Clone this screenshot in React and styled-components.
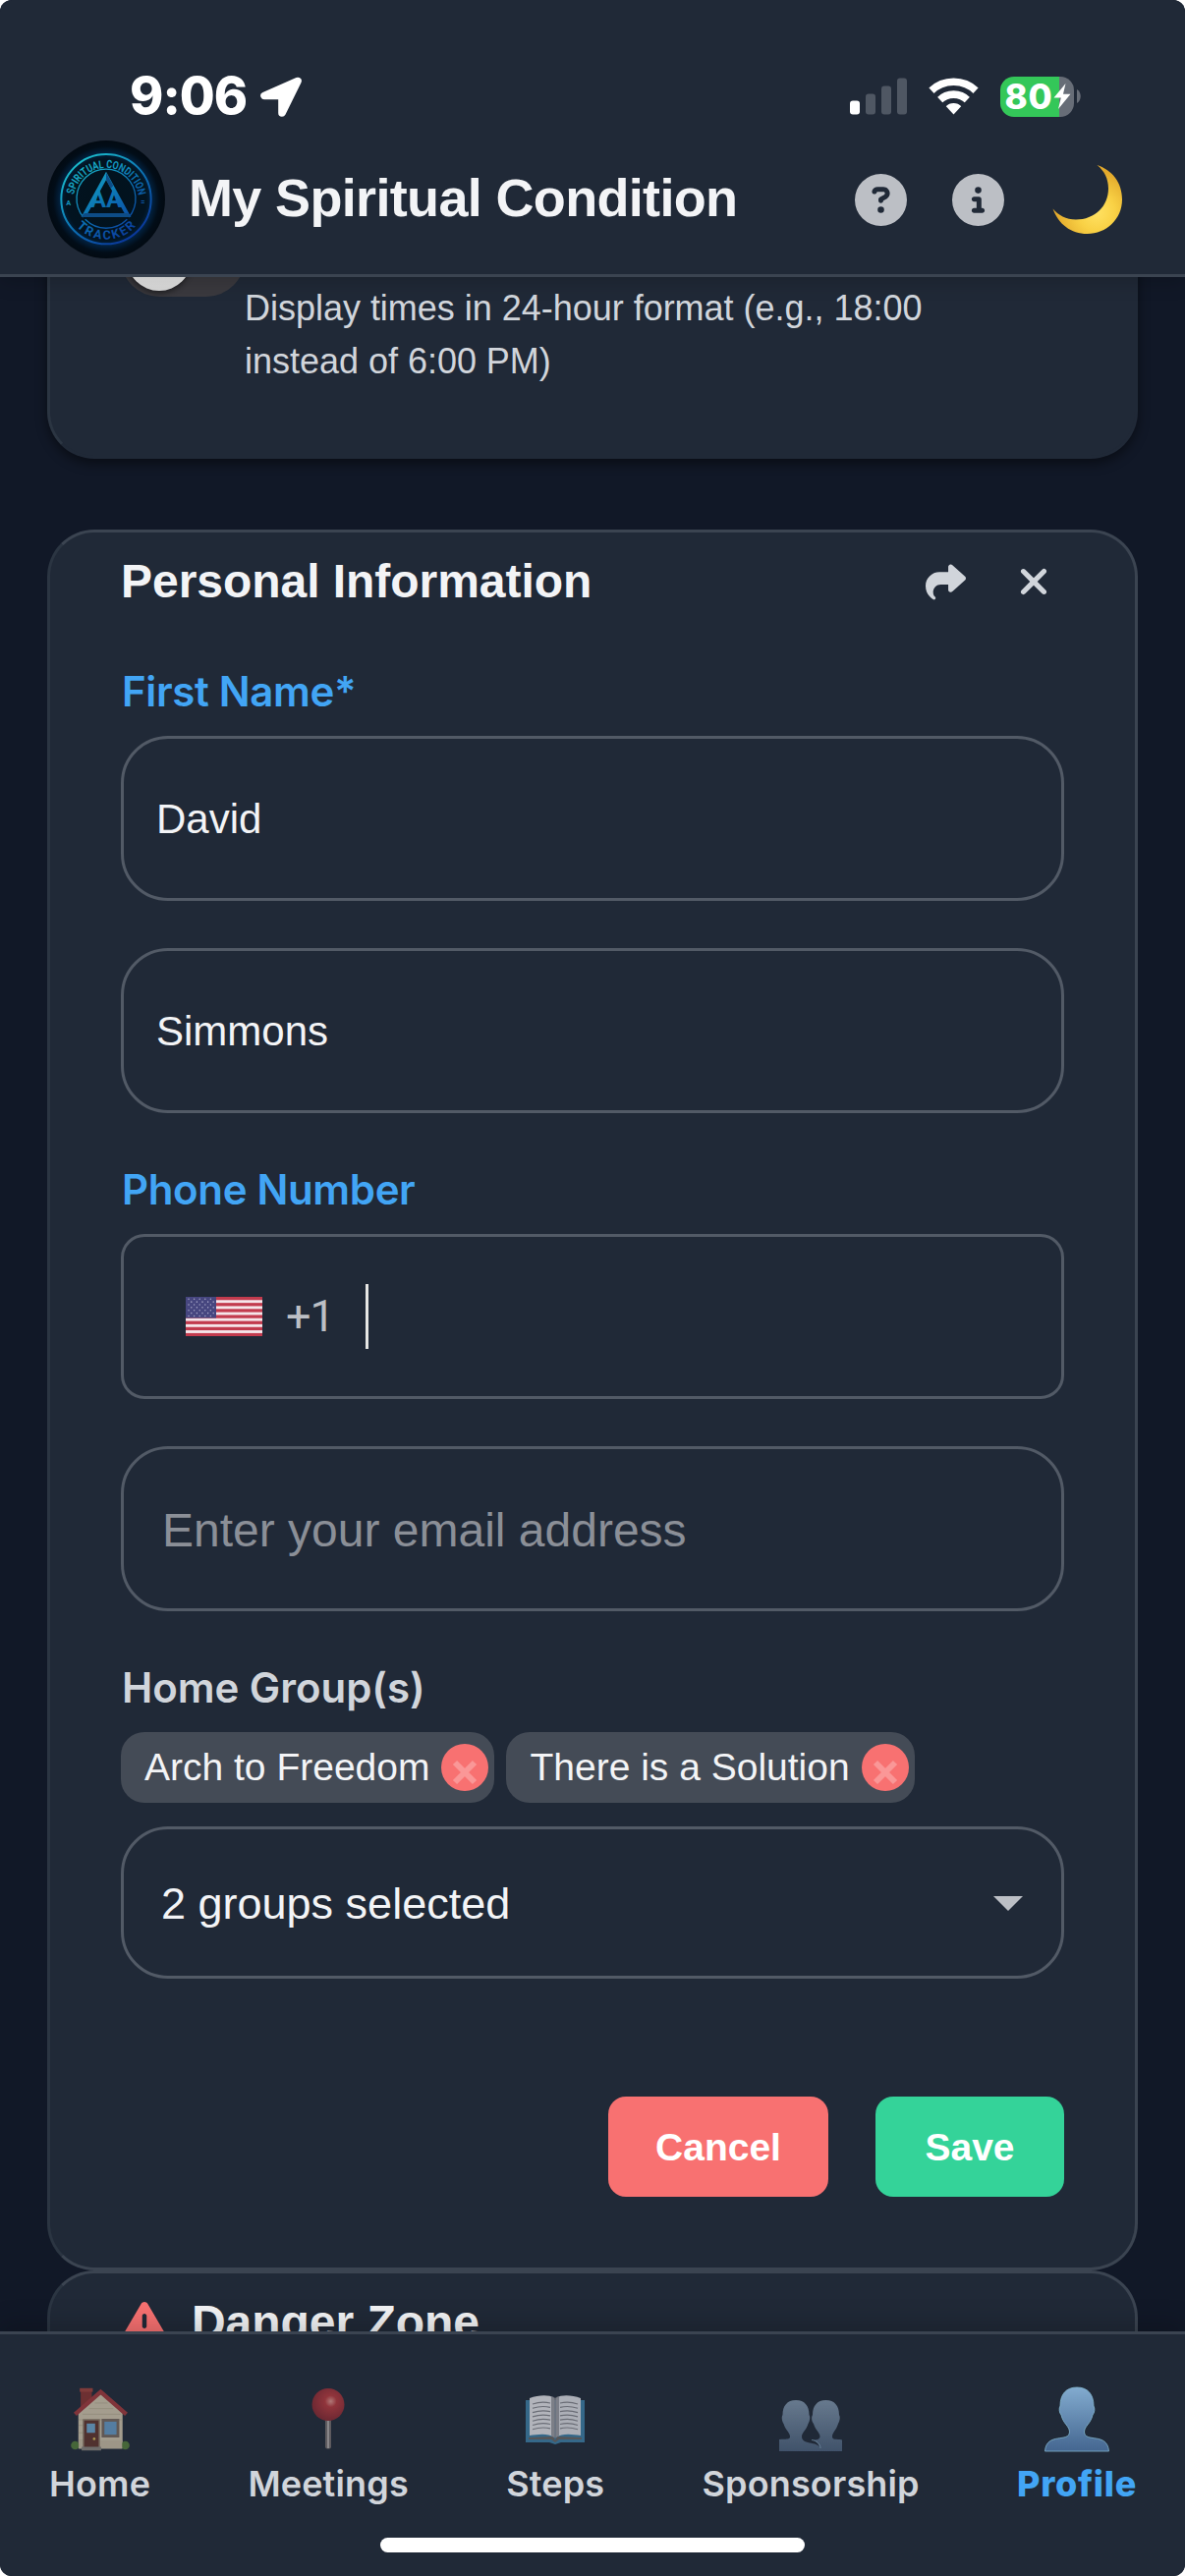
import React from "react";
import styled, { createGlobalStyle, css } from "styled-components";
import {
  FaCircleQuestion,
  FaCircleInfo,
  FaShare,
  FaXmark,
  FaTriangleExclamation,
} from "react-icons/fa6";

const helvetica = `"Liberation Sans", Helvetica, Arial, sans-serif`;
const system = `Inter, "Liberation Sans", sans-serif`;

const GlobalStyle = createGlobalStyle`
  *, *::before, *::after { box-sizing: border-box; }
  html, body { margin: 0; background: #ffffff; }
  svg { display: block; flex: none; }
`;

const Screen = styled.div`
  display: flex;
  flex-direction: column;
  width: 1206px;
  height: 2622px;
  overflow: hidden;
  border-radius: 12px;
  background: #111827;
  color: #f3f4f6;
  font-family: ${helvetica};
`;

/* ---------- header ---------- */

const Header = styled.header`
  position: relative;
  z-index: 2;
  flex: none;
  height: 282px;
  padding-top: 53px;
  background: #202937;
  border-bottom: 3px solid #3b4451;
  box-shadow: 0 6px 18px rgba(0, 0, 0, 0.16);
`;

const StatusBar = styled.div`
  display: flex;
  align-items: center;
  justify-content: space-between;
  height: 90px;
  padding: 0 106px 0 132px;
`;

const StatusGroup = styled.div`
  display: flex;
  align-items: center;
  gap: ${(p) => p.$gap}px;
`;

const Clock = styled.time`
  width: 118px;
  font: 800 52px/60px ${system};
  letter-spacing: -1px;
  white-space: nowrap;
  color: #ffffff;
`;

const Battery = styled.div`
  display: flex;
  align-items: center;
  gap: 3px;
`;

const BatteryBody = styled.div`
  display: flex;
  align-items: center;
  width: 75px;
  height: 41px;
  padding-left: 4.5px;
  border-radius: 14px;
  background: linear-gradient(90deg, #34c759 80%, #676d77 80%);
`;

const BatteryLevel = styled.span`
  font: 800 35px/41px ${system};
  letter-spacing: 0.8px;
  color: #ffffff;
`;

const TitleBar = styled.div`
  display: flex;
  align-items: center;
  height: 120px;
  padding: 0 60px 0 48px;
`;

const AppTitle = styled.h1`
  flex: 1;
  margin: 0 0 5px 24px;
  font: 700 54px/64px ${helvetica};
  letter-spacing: -0.66px;
  white-space: nowrap;
`;

const Actions = styled.div`
  display: flex;
  align-items: center;
  gap: 46px;
  color: #bcbfc5;
`;

/* ---------- content ---------- */

const Content = styled.main`
  flex: 1;
  min-height: 0;
  overflow: hidden;
  padding: 0 48px;
`;

const Card = styled.section`
  width: 1110px;
  padding: 0 72px;
  border: 3px solid #3b4451;
  border-left-color: #2b3542;
  border-radius: 48px;
  background: #202937;
`;

const SettingsCard = styled(Card)`
  height: 285px;
  margin: -100px 0 72px;
  padding-top: 39px;
  display: flex;
  border-color: #202937;
  border-left-color: #2b3542;
  box-shadow: 0 5px 12px rgba(0, 0, 0, 0.45);
`;

const Switch = styled.div`
  flex: none;
  width: 126px;
  height: 78px;
  padding: 6px;
  border-radius: 39px;
  background: #3a393e;
`;

const SwitchThumb = styled.div`
  width: 66px;
  height: 66px;
  border-radius: 50%;
  background: linear-gradient(#ffffff 55%, #d8d8d8);
  box-shadow: 0 3px 5px rgba(0, 0, 0, 0.4);
`;

const SettingHint = styled.p`
  width: 740px;
  margin: 63px 0 0;
  font-size: 36px;
  line-height: 54px;
  letter-spacing: -0.02px;
  color: #d1d5db;
`;

const ProfileCard = styled(Card)`
  height: 1772px;
  padding-top: 20px;
`;

const CardHead = styled.div`
  display: flex;
  align-items: center;
  justify-content: space-between;
  height: 60px;
  margin-bottom: 52px;
`;

const CardTitle = styled.h2`
  margin: 0;
  font: 700 48px/60px ${helvetica};
  letter-spacing: -0.04px;
  white-space: nowrap;
`;

const HeadActions = styled.div`
  display: flex;
  gap: 27.5px;
`;

const IconButton = styled.button`
  display: flex;
  align-items: center;
  justify-content: center;
  width: 62px;
  height: 60px;
  padding: 0;
  border: 0;
  background: none;
  color: #d1d5db;
`;

const Form = styled.div`
  display: flex;
  flex-direction: column;
  gap: 48px;
`;

const Field = styled.div`
  display: flex;
  flex-direction: column;
  gap: 15px;
`;

const Label = styled.div`
  height: 60px;
  padding-left: 1px;
  font: 600 42px/60px ${system};
  letter-spacing: ${(p) => (p.$muted ? -0.05 : -0.35)}px;
  color: ${(p) => (p.$muted ? "#d1d5db" : "#42a5f5")};
`;

const Input = styled.div`
  display: flex;
  align-items: center;
  height: ${(p) => p.$height || 168}px;
  padding: 1px 36px 0 33px;
  border: 3px solid #525a66;
  border-radius: 48px;
  font-size: 42px;
  white-space: nowrap;
  ${(p) =>
    p.$placeholder &&
    css`
      padding: 2px 36px 0 39px;
      font-size: 48px;
      color: #8b8f97;
    `}
`;

const PhoneInput = styled(Input)`
  padding: 0 36px 0 63px;
  border-radius: 24px;
`;

const DialCode = styled.span`
  margin-left: 24px;
  font: 400 45px/60px Roboto, sans-serif;
  letter-spacing: -1px;
  color: #bcbfc5;
`;

const Caret = styled.span`
  width: 3px;
  height: 66px;
  margin-left: 32px;
  background: #e6e6e4;
`;

const Chips = styled.div`
  display: flex;
  gap: 12px;
  margin-bottom: 9px;
`;

const Chip = styled.div`
  display: flex;
  align-items: center;
  gap: 12px;
  height: 72px;
  padding: 0 6px 0 24px;
  border-radius: 24px;
  background: #444b56;
  font-size: 39px;
  line-height: 46px;
  white-space: nowrap;
`;

const ChipRemove = styled.span`
  display: flex;
  align-items: center;
  justify-content: center;
  width: 48px;
  height: 48px;
  padding-top: 10px;
  border-radius: 50%;
  background: #f87171;
`;

const Select = styled(Input)`
  justify-content: space-between;
  padding: 2px 39px 0 38px;
  font-size: 45px;
`;

const Buttons = styled.div`
  display: flex;
  justify-content: flex-end;
  gap: 48px;
  margin-top: 72px;
`;

const Button = styled.button`
  width: ${(p) => p.$width}px;
  height: 102px;
  padding: 2px 0 0;
  border: 0;
  border-radius: 18px;
  background: ${(p) => p.$color};
  color: #ffffff;
  font: 700 39px/50px ${helvetica};
`;

const DangerCard = styled(Card)`
  height: 260px;
  padding-top: 18px;
`;

const DangerHead = styled.div`
  display: flex;
  align-items: center;
  gap: 24px;
  height: 63px;

  svg {
    color: #f87171;
  }
`;

/* ---------- bottom navigation ---------- */

const BottomNav = styled.nav`
  position: relative;
  z-index: 2;
  display: flex;
  flex-direction: column;
  align-items: center;
  flex: none;
  height: 249px;
  padding-top: 51px;
  background: #202937;
  border-top: 3px solid #3b4451;
  box-shadow: 0 -8px 24px rgba(0, 0, 0, 0.18);
`;

const Tabs = styled.div`
  display: flex;
  justify-content: space-between;
  width: 100%;
  padding: 0 49px 0 50px;
`;

const Tab = styled.div`
  display: flex;
  flex-direction: column;
  align-items: center;
  gap: 7px;
  font: ${(p) => (p.$active ? 800 : 600)} 36px/44px ${system};
  letter-spacing: ${(p) => (p.$active ? 0.7 : 0.15)}px;
  color: ${(p) => (p.$active ? "#42a5f5" : "#d1d5db")};

  svg {
    opacity: ${(p) => (p.$active ? 1 : 0.7)};
  }
`;

const HomeIndicator = styled.div`
  width: 432px;
  height: 15px;
  margin-top: 33px;
  border-radius: 8px;
  background: #ffffff;
`;

/* ---------- drawings ---------- */

const LocationArrow = () => (
  <svg width="42" height="41" viewBox="0 0 42 41">
    <path d="M38 4.5 4 19.5H22V37Z" fill="#fff" stroke="#fff" strokeWidth="7.6" strokeLinejoin="round" />
  </svg>
);

const SignalBars = () => (
  <svg width="58" height="38" viewBox="0 0 58 38">
    <rect x="0" y="23.5" width="10" height="14" rx="3" fill="#fff" />
    <rect x="16" y="16.5" width="10" height="21" rx="3" fill="#4f5763" />
    <rect x="32" y="8.5" width="10" height="29" rx="3" fill="#4f5763" />
    <rect x="48" y="0.5" width="10" height="37" rx="3" fill="#4f5763" />
  </svg>
);

const Wifi = () => (
  <svg width="51" height="38" viewBox="0 0 51 38">
    <clipPath id="wedge">
      <path d="M25.5 37.5-14.5-5.7H65.5Z" />
    </clipPath>
    <g clipPath="url(#wedge)" fill="none" stroke="#fff" strokeWidth="7.6">
      <circle cx="25.5" cy="37.5" r="33.2" />
      <circle cx="25.5" cy="37.5" r="20.4" />
      <circle cx="25.5" cy="37.5" r="11.4" fill="#fff" stroke="none" />
    </g>
  </svg>
);

const Bolt = () => (
  <svg width="18" height="26" viewBox="0 0 18 26">
    <path d="M12.5 0 .5 14.5H7.8L5 26 17.5 10.8H10Z" fill="#fff" />
  </svg>
);

const Logo = () => (
  <svg width="120" height="120" viewBox="0 0 360 360">
    <defs>
      <linearGradient id="neon" gradientUnits="userSpaceOnUse" x1="80" y1="60" x2="270" y2="310">
        <stop offset="0" stopColor="#1cc4cf" />
        <stop offset="0.5" stopColor="#0c74b4" />
        <stop offset="1" stopColor="#0a2f96" />
      </linearGradient>
      <radialGradient id="glow">
        <stop offset="0" stopColor="#02121c" />
        <stop offset="0.68" stopColor="#021320" />
        <stop offset="0.78" stopColor="#02213f" />
        <stop offset="0.9" stopColor="#020d18" />
        <stop offset="1" stopColor="#020a12" />
      </radialGradient>
      <path id="topArc" d="M80 184A100 100 0 1 1 280 184" />
      <path id="bottomArc" d="M58 180A122 122 0 0 0 302 180" />
    </defs>
    <circle cx="180" cy="180" r="180" fill="url(#glow)" />
    <g fill="none" stroke="url(#neon)">
      <circle cx="180" cy="179" r="137" strokeWidth="6" />
      <path d="M110 234A90 90 0 1 1 250 234" strokeWidth="4" />
      <path d="M116 241A90 90 0 0 0 244 241" strokeWidth="4" />
      <path d="M180 108 114 228H246Z" strokeWidth="12" />
    </g>
    <path d="M180 98 202 138 194 146 180 120ZM104 234H256L246 222H114Z" fill="#0d4c86" />
    <g fill="url(#neon)" fontFamily="Roboto, sans-serif" fontWeight="700">
      <text fontSize="34">
        <textPath href="#topArc" startOffset="18" textLength="280" lengthAdjust="spacingAndGlyphs">
          SPIRITUAL CONDITION
        </textPath>
      </text>
      <text fontSize="38" textAnchor="middle" letterSpacing="6">
        <textPath href="#bottomArc" startOffset="51%">
          TRACKER
        </textPath>
      </text>
      <text x="58" y="197" fontSize="22">A</text>
      <text x="286" y="196" fontSize="22">=</text>
      <text x="131" y="205" fontSize="74" textLength="98" lengthAdjust="spacingAndGlyphs">AA</text>
    </g>
  </svg>
);

const Moon = () => (
  <svg width="78" height="78" viewBox="0 0 78 78">
    <defs>
      <radialGradient id="moon" gradientUnits="userSpaceOnUse" cx="48" cy="52" r="42">
        <stop offset="0" stopColor="#ffe263" />
        <stop offset="0.45" stopColor="#f9d145" />
        <stop offset="1" stopColor="#e3a92b" />
      </radialGradient>
    </defs>
    <path
      d="M48.5 4C64 9 74 22 74 39 74 59 58 74 38.5 74 22 74 9 64 3.5 48.5 9 55 17 59.5 27 59.5 46 59.5 60 46 60 28 60 18 56 10 48.5 4Z"
      fill="url(#moon)"
    />
  </svg>
);

const Flag = () => (
  <svg width="78" height="40" viewBox="0 0 78 39" preserveAspectRatio="none">
    <rect width="78" height="39" fill="#f5e6ea" />
    {[0, 1, 2, 3, 4, 5, 6].map((i) => (
      <rect key={i} y={i * 6} width="78" height="3.2" fill="#c23b4e" />
    ))}
    <rect width="31" height="21" fill="#46467f" />
    {[0, 1, 2, 3, 4, 5, 6].map((r) =>
      [0, 1, 2, 3, 4].map((c) => (
        <circle key={`${r}-${c}`} cx={3 + c * 5.6 + (r % 2) * 2.8} cy={2.2 + r * 2.8} r="0.75" fill="#a5a5c6" />
      ))
    )}
  </svg>
);

const CrossMark = () => (
  <svg width="26" height="26" viewBox="0 0 26 26">
    <path d="M3 3 23 23M23 3 3 23" stroke="#fa9797" strokeWidth="6" />
  </svg>
);

const Triangle = () => (
  <svg width="30" height="15" viewBox="0 0 30 15">
    <path d="M0 0H30L15 15Z" fill="#bcbfc5" />
  </svg>
);

const House = () => (
  <svg width="72" height="72" viewBox="-2 0 76 76">
    <rect x="15" y="5" width="12" height="22" fill="#8e3330" />
    <rect x="14" y="4" width="14" height="4" fill="#a8433c" />
    <path d="M12.5 31 36.5 9 60 31V69H12.5Z" fill="#dccfb4" />
    <g stroke="#c6b89c" strokeWidth="1">
      <path d="M30 20H44M24 26H50M17 32H58M13 38H59M13 44H18M13 52H18M13 60H18" />
    </g>
    <path d="M9 32 36.5 8 64 32" fill="none" stroke="#a93a3c" strokeWidth="4.6" />
    <circle cx="9" cy="65.5" r="4.5" fill="#55803a" />
    <circle cx="63" cy="65.5" r="4.5" fill="#55803a" />
    <rect x="13" y="60" width="46.5" height="9" fill="#d3c5a9" />
    <rect x="18" y="38" width="17" height="31" fill="#65352d" stroke="#96826c" strokeWidth="1.5" />
    <rect x="21.5" y="42" width="9" height="10" fill="#73add6" />
    <circle cx="29.5" cy="58.5" r="1.4" fill="#e3c65b" />
    <rect x="39" y="38.5" width="16" height="17" fill="#6aa1cf" stroke="#7d6c61" strokeWidth="3" />
    <rect x="16" y="67" width="21" height="4" fill="#8f8981" />
  </svg>
);

const Pin = () => (
  <svg width="72" height="72" viewBox="0 0 72 72">
    <defs>
      <radialGradient id="pinHead" cx="0.58" cy="0.4" r="0.6">
        <stop offset="0" stopColor="#ee9a92" />
        <stop offset="0.3" stopColor="#c03a3e" />
        <stop offset="1" stopColor="#8e2831" />
      </radialGradient>
    </defs>
    <rect x="33" y="32" width="6" height="33.5" rx="2" fill="#77706f" />
    <rect x="35" y="34" width="2" height="31" fill="#b5aeac" />
    <circle cx="36" cy="20.5" r="16.5" fill="url(#pinHead)" />
  </svg>
);

const Book = () => (
  <svg width="72" height="72" viewBox="0 0 72 72">
    <path d="M6 16H66V59H42L36 61 30 59H6Z" fill="#3e83ac" />
    <path d="M9 54 34 53 36 57 38 53 63 54V56H40L36 59 32 56H9Z" fill="#6d6a67" />
    <path d="M10 14C19 11 29 10 35.5 14V54C28 49 18 51 10 52Z" fill="#f0f0f4" />
    <path d="M62 14C53 11 43 10 36.5 14V54C44 49 54 51 62 52Z" fill="#e8e8ee" />
    <path d="M32 12C34 12 35 13 36 14 37 13 38 12 40 12V52L36 55 32 52Z" fill="#8b8b92" opacity="0.75" />
    <g stroke="#8a8a91" strokeWidth="1.2" fill="none">
      {[0, 1, 2, 3, 4, 5, 6].map((i) => (
        <path
          key={i}
          d={`M13 ${20 + i * 4.3}Q22 ${17 + i * 4.3} 31 ${19 + i * 4.3}M41 ${19 + i * 4.3}Q50 ${17 + i * 4.3} 59 ${20 + i * 4.3}`}
        />
      ))}
    </g>
  </svg>
);

const Person = () => (
  <svg width="72" height="72" viewBox="0 0 72 72">
    <defs>
      <linearGradient id="bust" gradientUnits="userSpaceOnUse" x1="0" y1="3" x2="0" y2="68">
        <stop offset="0" stopColor="#82abcf" />
        <stop offset="1" stopColor="#446690" />
      </linearGradient>
    </defs>
    <path
      d="M36 3C47 3 53 10 53 22 54.5 24 54 29 52 31 50 40 44 42 43.5 48 43.5 60 67 48 68.5 68H3.5C5 48 28.5 60 28.5 48 28 42 22 40 20 31 18 29 17.5 24 19 22 19 10 25 3 36 3Z"
      fill="url(#bust)"
      stroke="#83b6cf"
      strokeWidth="0.8"
    />
  </svg>
);

const People = () => (
  <svg width="72" height="72" viewBox="0 0 72 72">
    <defs>
      <linearGradient id="busts" gradientUnits="userSpaceOnUse" x1="0" y1="16" x2="0" y2="68">
        <stop offset="0" stopColor="#869cb3" />
        <stop offset="1" stopColor="#4e6480" />
      </linearGradient>
    </defs>
    <g fill="url(#busts)">
      <path d="M21 16C30 16 34.5 22 34.5 31 36 33 35 38 33.5 40 32 46 27 49 27 53 27 63 46 56 47 68H4V56C10 55 15 57 15 53 15 49 10 46 8.5 40 7 38 6 33 7.5 31 7.5 22 12 16 21 16Z" />
      <path d="M51.5 16C60.5 16 65 22 65 31 66.5 33 65.5 38 64 40 62.5 46 58 49 58 53 58 57 62 55 68 56.5V68H46C46 61 41 57 37 56.5 42 56.5 45.5 56 45.5 53 45.5 49 40.5 46 39 40 37 38 36.5 33 38 31 38 22 42.5 16 51.5 16Z" />
    </g>
    <path d="M37 56.5C42 57 46 61 46 65" stroke="#8fb3cc" strokeWidth="0.8" fill="none" />
  </svg>
);

const tabs = [
  { label: "Home", Icon: House },
  { label: "Meetings", Icon: Pin },
  { label: "Steps", Icon: Book },
  { label: "Sponsorship", Icon: People },
  { label: "Profile", Icon: Person, active: true },
];

const groups = ["Arch to Freedom", "There is a Solution"];

export default function App() {
  return (
    <>
      <GlobalStyle />
      <Screen>
        <Header>
          <StatusBar>
            <StatusGroup $gap={15}>
              <Clock>9:06</Clock>
              <LocationArrow />
            </StatusGroup>
            <StatusGroup $gap={22}>
              <SignalBars />
              <Wifi />
              <Battery>
                <BatteryBody>
                  <BatteryLevel>80</BatteryLevel>
                  <Bolt />
                </BatteryBody>
                <svg width="4" height="14" viewBox="0 0 4 14">
                  <path d="M0 0C5 3 5 11 0 14Z" fill="#676d77" />
                </svg>
              </Battery>
            </StatusGroup>
          </StatusBar>
          <TitleBar>
            <Logo />
            <AppTitle>My Spiritual Condition</AppTitle>
            <Actions>
              <FaCircleQuestion size={53} />
              <FaCircleInfo size={53} />
              <Moon />
            </Actions>
          </TitleBar>
        </Header>

        <Content>
          <SettingsCard>
            <Switch>
              <SwitchThumb />
            </Switch>
            <SettingHint>Display times in 24-hour format (e.g., 18:00 instead of 6:00 PM)</SettingHint>
          </SettingsCard>

          <ProfileCard>
            <CardHead>
              <CardTitle>Personal Information</CardTitle>
              <HeadActions>
                <IconButton>
                  <FaShare size={41} />
                </IconButton>
                <IconButton>
                  <FaXmark size={42} />
                </IconButton>
              </HeadActions>
            </CardHead>
            <Form>
              <Field>
                <Label>First Name*</Label>
                <Input>David</Input>
              </Field>
              <Input>Simmons</Input>
              <Field>
                <Label>Phone Number</Label>
                <PhoneInput>
                  <Flag />
                  <DialCode>+1</DialCode>
                  <Caret />
                </PhoneInput>
              </Field>
              <Input $placeholder>Enter your email address</Input>
              <Field>
                <Label $muted>Home Group(s)</Label>
                <Chips>
                  {groups.map((name) => (
                    <Chip key={name}>
                      {name}
                      <ChipRemove>
                        <CrossMark />
                      </ChipRemove>
                    </Chip>
                  ))}
                </Chips>
                <Select $height={155}>
                  2 groups selected
                  <Triangle />
                </Select>
              </Field>
              <Buttons>
                <Button $width={224} $color="#f87171">Cancel</Button>
                <Button $width={192} $color="#34d399">Save</Button>
              </Buttons>
            </Form>
          </ProfileCard>

          <DangerCard>
            <DangerHead>
              <FaTriangleExclamation size={48} />
              <CardTitle>Danger Zone</CardTitle>
            </DangerHead>
          </DangerCard>
        </Content>

        <BottomNav>
          <Tabs>
            {tabs.map(({ label, Icon, active }) => (
              <Tab key={label} $active={active}>
                <Icon />
                {label}
              </Tab>
            ))}
          </Tabs>
          <HomeIndicator />
        </BottomNav>
      </Screen>
    </>
  );
}
